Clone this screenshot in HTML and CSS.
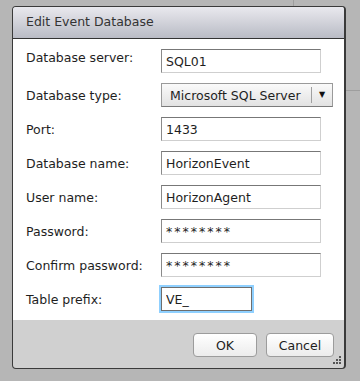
FILE: index.html
```
<!DOCTYPE html>
<html lang="en">
<head>
    <meta charset="UTF-8">
    <meta name="viewport" content="width=device-width, initial-scale=1.0">
    <title>Edit Event Database</title>
    <link rel="stylesheet" href="styles.css">
</head>
<body>
    <div class="backdrop-line vline"></div>
    <div class="backdrop-line hline"></div>

    <div class="dialog">
        <div class="titlebar">Edit Event Database</div>

        <div class="content">
            <div class="row row-first">
                <label class="label">Database server:</label>
                <input class="field" type="text" value="SQL01">
            </div>
            <div class="row">
                <label class="label">Database type:</label>
                <div class="select">
                    <span class="select-text">Microsoft SQL Server</span>
                    <span class="select-arrow">&#9660;</span>
                </div>
            </div>
            <div class="row">
                <label class="label">Port:</label>
                <input class="field" type="text" value="1433">
            </div>
            <div class="row">
                <label class="label">Database name:</label>
                <input class="field" type="text" value="HorizonEvent">
            </div>
            <div class="row">
                <label class="label">User name:</label>
                <input class="field" type="text" value="HorizonAgent">
            </div>
            <div class="row">
                <label class="label">Password:</label>
                <input class="field stars" type="text" value="********">
            </div>
            <div class="row">
                <label class="label">Confirm password:</label>
                <input class="field stars" type="text" value="********">
            </div>
            <div class="row">
                <label class="label">Table prefix:</label>
                <input class="field short focused" type="text" value="VE_">
            </div>
        </div>

        <div class="footer">
            <button class="btn btn-ok">OK</button>
            <button class="btn btn-cancel">Cancel</button>
            <div class="grip">
                <span></span><span></span><span></span>
                <span></span><span></span><span></span>
            </div>
        </div>
    </div>
</body>
</html>
```

FILE: styles.css
```
body {
    margin: 0;
    width: 360px;
    height: 381px;
    overflow: hidden;
    background-color: #b6b6b6;
    font-family: "DejaVu Sans", Verdana, sans-serif;
    font-size: 12.5px;
    color: #1e1e1e;
    position: relative;
}
.backdrop-line {
    position: absolute;
    background-color: #9e9e9e;
}
.vline {
    left: 293px;
    top: 0;
    width: 1px;
    height: 7px;
}
.hline {
    left: 346px;
    top: 90px;
    width: 14px;
    height: 1px;
}
.dialog {
    position: relative;
    margin: 6px 0 0 12px;
    width: 331px;
    height: 361px;
    border: 1px solid #3a3a3a;
    border-right-width: 2px;
    border-radius: 4px;
    overflow: hidden;
    display: flex;
    flex-direction: column;
    background-color: #d0d0d0;
}
.titlebar {
    height: 31px;
    line-height: 30px;
    padding-left: 13px;
    background: linear-gradient(#e9e9ee, #b9bbc5);
    border-bottom: 1px solid #333;
    color: #333;
}
.content {
    background-color: #fff;
    padding: 10px 0 9px 13px;
    display: flex;
    flex-direction: column;
    gap: 10px;
}
.row {
    display: flex;
    align-items: center;
    height: 24px;
}
.label {
    width: 135px;
}
.row-first .label {
    margin-bottom: 8px;
}
.field {
    box-sizing: border-box;
    width: 160px;
    height: 24px;
    margin: 0;
    padding: 0 4px;
    border: 1px solid #cfcfcf;
    border-top-color: #777;
    border-left-color: #8a8a8a;
    font-family: inherit;
    font-size: 12.5px;
    color: #1e1e1e;
    background: #fff;
}
.stars {
    letter-spacing: 2px;
}
.short {
    width: 91px;
}
.focused {
    border: 1px solid #6e6e6e;
    outline: 2px solid #8fd0ff;
    outline-offset: 0;
}
.select {
    box-sizing: border-box;
    width: 172px;
    height: 24px;
    display: flex;
    align-items: center;
    border: 1px solid #9a9a9a;
    border-bottom-color: #7a7a7a;
    background: linear-gradient(#fafafa, #e2e2e2);
}
.select-text {
    flex: 1;
    padding-left: 8px;
}
.select-arrow {
    width: 20px;
    height: 16px;
    line-height: 16px;
    border-left: 1px solid #a0a0a0;
    text-align: center;
    font-size: 8px;
    color: #111;
}
.footer {
    flex: 1;
    display: flex;
    justify-content: flex-end;
    align-items: flex-start;
    gap: 9px;
    padding: 13px 10px 0 0;
}
.btn {
    height: 24px;
    border: 1px solid #9c9c9c;
    border-radius: 4px;
    background: linear-gradient(#ffffff, #ececec);
    font-family: inherit;
    font-size: 12.5px;
    color: #1e1e1e;
    padding: 0;
}
.btn-ok {
    width: 64px;
}
.btn-cancel {
    width: 68px;
}
.grip {
    position: absolute;
    right: 3px;
    bottom: 3px;
    width: 9px;
    height: 9px;
}
.grip span {
    position: absolute;
    width: 2px;
    height: 2px;
    background-color: #555;
}
.grip span:nth-child(1) { right: 0; top: 0; }
.grip span:nth-child(2) { right: 3px; top: 3px; }
.grip span:nth-child(3) { right: 0; top: 3px; }
.grip span:nth-child(4) { right: 6px; top: 6px; }
.grip span:nth-child(5) { right: 3px; top: 6px; }
.grip span:nth-child(6) { right: 0; top: 6px; }
```
